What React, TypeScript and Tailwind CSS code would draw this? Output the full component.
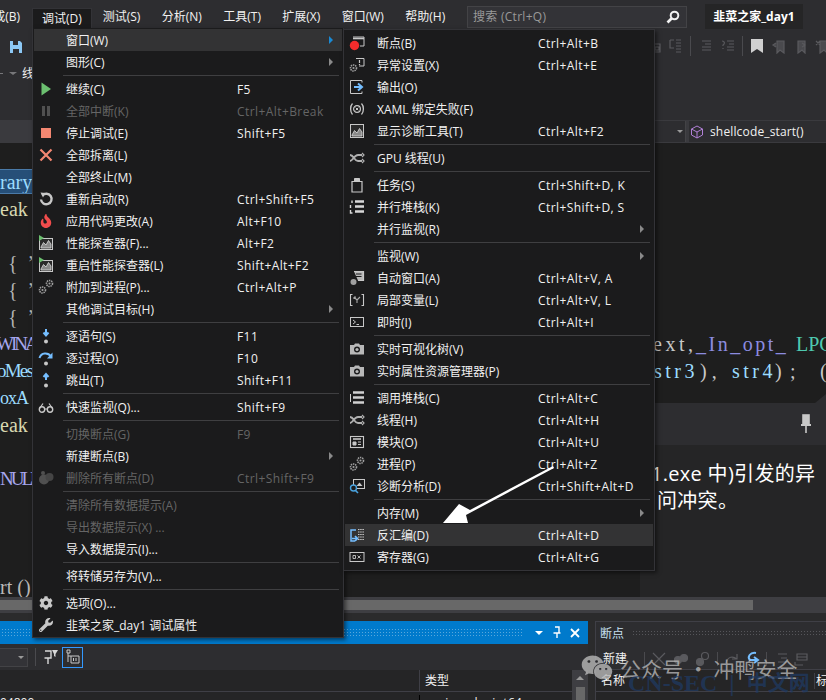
import React from "react";
import { FaCog, FaWrench, FaWeixin, FaFire } from "react-icons/fa";

type IconProps = { children: React.ReactNode; c?: string };
const S = ({ children, c = "#c8c8c8" }: IconProps) => (
  <svg width="16" height="16" viewBox="0 0 16 16" fill="none" stroke={c} strokeWidth="1">
    {children}
  </svg>
);

const Gear = ({ x, y, r, c = "#a0a0a0" }: { x: number; y: number; r: number; c?: string }) => (
  <g>
    <circle cx={x} cy={y} r={r} stroke={c} strokeWidth="1.6" strokeDasharray="1.4 0.8" fill="none" />
    <circle cx={x} cy={y} r={r * 0.35} fill={c} stroke="none" />
  </g>
);

const Chart = ({ green }: { green?: boolean }) => (
  <S>
    <rect x="1.5" y={green ? 3.5 : 1.5} width="13" height={green ? 11 : 13} fill="#2a2a2a" stroke="#c8c8c8" />
    <path d="M3 12 L5.5 7.5 L8 10 L10.5 5.5 L13 9 V13 H3Z" fill="#8a8a8a" stroke="#dcdcdc" strokeWidth="0.8" />
    {green && <path d="M1 0 L6 3 L1 6Z" fill="#6cc070" stroke="none" />}
  </S>
);

const Dot = ({ c = "#c8c8c8", y = 13.5 }: { c?: string; y?: number }) => <circle cx="8" cy={y} r="2" fill={c} stroke="none" />;

const Threads = () => (
  <S>
    <path d="M1 5 C5 5 5 11 9 11 H13 M1 11 C4 11 5 5 9 5 H13" stroke="#b0b0b0" strokeWidth="1.8" />
    <path d="M13 3 L15 5 L13 7 M13 9 L15 11 L13 13" stroke="#b0b0b0" strokeWidth="1.2" />
  </S>
);

const Camera = () => (
  <S>
    <path d="M1 4 H5 L6 2.5 H10 L11 4 H15 V13.5 H1Z" fill="#b8b8b8" stroke="none" />
    <circle cx="8" cy="8.5" r="3" fill="#1b1b1c" stroke="none" />
    <circle cx="8" cy="8.5" r="1.6" fill="#b8b8b8" stroke="none" />
  </S>
);

const StackIcon = () => (
  <S>
    <path d="M4 2.5 H15 M4 7.5 H15 M4 12.5 H15" stroke="#d0d0d0" strokeWidth="2.6" />
    <path d="M1.5 4 V12" stroke="#d0d0d0" strokeWidth="1" />
  </S>
);

const Gears = () => (
  <S>
    <Gear x={4.5} y={11} r={3} />
    <Gear x={11.5} y={4.5} r={3} />
  </S>
);

const icons: Record<string, React.ReactNode> = {
  play: <S c="none"><path d="M3.5 1.5 L13 8 L3.5 14.5Z" fill="#6cc070" /></S>,
  pause: <S c="none"><path d="M4 3 H7 V13 H4Z M9 3 H12 V13 H9Z" fill="#505050" /></S>,
  stop: <S c="none"><rect x="3" y="3" width="10" height="10" fill="#f48771" /></S>,
  cross: <S c="#f48771"><path d="M2.5 2.5 L13.5 13.5 M13.5 2.5 L2.5 13.5" strokeWidth="2.2" /></S>,
  restart: <S><path d="M4.3 4.5 A5.3 5.3 0 1 1 3 8.5" strokeWidth="2.4" /><path d="M2.5 1.5 L7.5 2 L5 6.5Z" fill="#c8c8c8" stroke="none" /></S>,
  fire: <FaFire size={14} color="#f14c4c" />,
  perf: <Chart green />,
  gears: <Gears />,
  into: <S c="none"><path d="M8 1 V6.5 M5.5 4.5 L8 7.5 L10.5 4.5" stroke="#75beff" strokeWidth="2" /><Dot /></S>,
  over: <S c="none"><path d="M1.5 8 C3 2.5 10 2 13 6.5" stroke="#75beff" strokeWidth="2" /><path d="M14.5 2.5 V8.5 H9Z" fill="#75beff" /><Dot /></S>,
  out: <S c="none"><path d="M8 8 V3 M5.5 5 L8 2 L10.5 5" stroke="#75beff" strokeWidth="2" /><Dot /></S>,
  glasses: <S><circle cx="4" cy="10.5" r="2.7" strokeWidth="1.4" /><circle cx="12" cy="10.5" r="2.7" strokeWidth="1.4" /><path d="M6.5 10 H9.5 M1.5 9.5 L5 4.5 M14.5 9.5 L11 4.5" strokeWidth="1.2" /></S>,
  delbp: <S c="none"><circle cx="6" cy="9.5" r="5" fill="#505050" /><circle cx="11.5" cy="7" r="4" fill="#454545" /><circle cx="5" cy="3" r="2" fill="#505050" /></S>,
  cog: <FaCog size={14} color="#c8c8c8" />,
  wrench: <FaWrench size={14} color="#c8c8c8" />,
  bp: <S><path d="M4 2 H15 V11 H11" stroke="#c8c8c8" /><path d="M4 3.5 H15" stroke="#c8c8c8" strokeWidth="1.6" /><circle cx="5.5" cy="10.5" r="4.7" fill="#f42c2c" stroke="none" /></S>,
  exc: <S><path d="M7 1.5 H15 V9 H10" /><path d="M10.5 3 V6 M10.5 7 V8" strokeWidth="1.2" /><Gear x={4.5} y={11} r={3} /></S>,
  output: <S><path d="M13 3.5 V1.5 H1.5 V14.5 H13 V12.5" /><path d="M5 8 H12 M9 4.5 L13 8 L9 11.5" stroke="#75beff" strokeWidth="2" /></S>,
  xaml: <S><path d="M3.5 2.5 C1 5 1 11 3.5 13.5 M12.5 2.5 C15 5 15 11 12.5 13.5" strokeWidth="1.3" /><circle cx="8" cy="8" r="3.4" strokeWidth="1.2" /><path d="M6.7 6.7 L9.3 9.3 M9.3 6.7 L6.7 9.3" strokeWidth="1" /></S>,
  diag: <Chart />,
  gpu: <Threads />,
  task: <S><path d="M3 4.5 H13 V15 H3Z" strokeWidth="1.2" /><path d="M5.5 1.5 H10.5 V4.5 H5.5Z" fill="#c8c8c8" /></S>,
  pstack: <S><path d="M6 2.5 H15 M6 7.5 H15 M6 12.5 H15" stroke="#d8d8d8" strokeWidth="2.6" /><path d="M3 1.5 V4 M1.5 6 V9 M1.5 11 V14 H3.5" stroke="#d8d8d8" strokeWidth="1.4" /></S>,
  autos: <S><path d="M5 1.5 H14.5 V10.5 H9" strokeWidth="1.2" fill="#b8b8b8" /><path d="M7 4 H12.5 M7 6.5 H12.5" stroke="#1b1b1c" strokeWidth="1.2" /><circle cx="4.5" cy="12" r="3" fill="#a0a0a0" stroke="none" /></S>,
  locals: <S><path d="M3.5 2.5 H1.5 V13.5 H3.5 M12.5 2.5 H14.5 V13.5 H12.5" strokeWidth="1.1" /><path d="M5 5 L8 8 V11 M11 5 L8 8 M5 5 H7 M5 5 V7" strokeWidth="1.1" stroke="#a8a8a8" /></S>,
  immediate: <S><rect x="1.5" y="3.5" width="13" height="9" strokeWidth="1" /><path d="M4 6 L6.5 8 L4 10 M7.5 10.5 H10" strokeWidth="1" /></S>,
  cam: <Camera />,
  stack: <StackIcon />,
  modules: <S><rect x="1.5" y="2.5" width="13" height="11" strokeWidth="1.1" /><path d="M4 5 H12" strokeWidth="1.6" /><path d="M4 8 H7 V11 H4Z M9 8 H12 M9 10.5 H12" fill="#c8c8c8" /></S>,
  analyze: <S><rect x="4.5" y="1.5" width="11" height="9" strokeWidth="1" /><path d="M7.5 8 L10.5 4.5 L13.5 8Z" fill="#c8c8c8" stroke="none" /><circle cx="4.5" cy="10" r="3" stroke="#4aa3df" strokeWidth="1.4" fill="#1b1b1c" /><path d="M6.5 12.5 L9 15" stroke="#4aa3df" strokeWidth="1.6" /></S>,
  disasm: <S c="none"><path d="M9 2.5 H15 M9 5 H15 M9 7.5 H15 M9 10 H15 M9 12.5 H15" stroke="#c8c8c8" strokeDasharray="1.5 .7" /><path d="M2 7 V3 H7 M2 3 V14 H6" stroke="#75beff" strokeWidth="1.5" /><path d="M3 11.5 H8 M6 9 L8.5 11.5 L6 14" stroke="#75beff" strokeWidth="1.7" /></S>,
  reg: <S><rect x="1" y="3.5" width="14" height="9" strokeWidth="1" /><path d="M4 6.5 H6.5 V9.5 H4Z M8.5 6.5 L11.5 9.5 M11.5 6.5 L8.5 9.5" strokeWidth="0.9" /></S>,
};

type Row = { k?: string; t?: string; s?: string; d?: boolean; sub?: boolean; hl?: boolean; sep?: boolean };

const menu1: Row[] = [
  { t: "窗口(W)", sub: true, hl: true },
  { t: "图形(C)", sub: true },
  { sep: true },
  { k: "play", t: "继续(C)", s: "F5" },
  { k: "pause", t: "全部中断(K)", s: "Ctrl+Alt+Break", d: true },
  { k: "stop", t: "停止调试(E)", s: "Shift+F5" },
  { k: "cross", t: "全部拆离(L)" },
  { t: "全部终止(M)" },
  { k: "restart", t: "重新启动(R)", s: "Ctrl+Shift+F5" },
  { k: "fire", t: "应用代码更改(A)", s: "Alt+F10" },
  { k: "perf", t: "性能探查器(F)...", s: "Alt+F2" },
  { k: "perf", t: "重启性能探查器(L)", s: "Shift+Alt+F2" },
  { k: "gears", t: "附加到进程(P)...", s: "Ctrl+Alt+P" },
  { t: "其他调试目标(H)", sub: true },
  { sep: true },
  { k: "into", t: "逐语句(S)", s: "F11" },
  { k: "over", t: "逐过程(O)", s: "F10" },
  { k: "out", t: "跳出(T)", s: "Shift+F11" },
  { sep: true },
  { k: "glasses", t: "快速监视(Q)...", s: "Shift+F9" },
  { sep: true },
  { t: "切换断点(G)", s: "F9", d: true },
  { t: "新建断点(B)", sub: true },
  { k: "delbp", t: "删除所有断点(D)", s: "Ctrl+Shift+F9", d: true },
  { sep: true },
  { t: "清除所有数据提示(A)", d: true },
  { t: "导出数据提示(X) ...", d: true },
  { t: "导入数据提示(I)..." },
  { sep: true },
  { t: "将转储另存为(V)..." },
  { sep: true },
  { k: "cog", t: "选项(O)..." },
  { k: "wrench", t: "韭菜之家_day1 调试属性" },
];

const menu2: Row[] = [
  { k: "bp", t: "断点(B)", s: "Ctrl+Alt+B" },
  { k: "exc", t: "异常设置(X)", s: "Ctrl+Alt+E" },
  { k: "output", t: "输出(O)" },
  { k: "xaml", t: "XAML 绑定失败(F)" },
  { k: "diag", t: "显示诊断工具(T)", s: "Ctrl+Alt+F2" },
  { sep: true },
  { k: "gpu", t: "GPU 线程(U)" },
  { sep: true },
  { k: "task", t: "任务(S)", s: "Ctrl+Shift+D, K" },
  { k: "pstack", t: "并行堆栈(K)", s: "Ctrl+Shift+D, S" },
  { t: "并行监视(R)", sub: true },
  { sep: true },
  { t: "监视(W)", sub: true },
  { k: "autos", t: "自动窗口(A)", s: "Ctrl+Alt+V, A" },
  { k: "locals", t: "局部变量(L)", s: "Ctrl+Alt+V, L" },
  { k: "immediate", t: "即时(I)", s: "Ctrl+Alt+I" },
  { sep: true },
  { k: "cam", t: "实时可视化树(V)" },
  { k: "cam", t: "实时属性资源管理器(P)" },
  { sep: true },
  { k: "stack", t: "调用堆栈(C)", s: "Ctrl+Alt+C" },
  { k: "gpu", t: "线程(H)", s: "Ctrl+Alt+H" },
  { k: "modules", t: "模块(O)", s: "Ctrl+Alt+U" },
  { k: "gears", t: "进程(P)", s: "Ctrl+Alt+Z" },
  { k: "analyze", t: "诊断分析(D)", s: "Ctrl+Shift+Alt+D" },
  { sep: true },
  { t: "内存(M)", sub: true },
  { k: "disasm", t: "反汇编(D)", s: "Ctrl+Alt+D", hl: true },
  { k: "reg", t: "寄存器(G)", s: "Ctrl+Alt+G" },
];

function MenuRows({ rows, labelClass, accent }: { rows: Row[]; labelClass: string; accent: boolean }) {
  return (
    <>
      {rows.map((r, i) =>
        r.sep ? (
          <div key={i} className="h-[5px] flex items-center pl-[29px] pr-[3px]">
            <div className="h-px w-full bg-[#3f3f41]" />
          </div>
        ) : (
          <div
            key={i}
            className={`h-[22px] flex items-center ${r.hl ? "bg-[#333334]" : ""} ${r.d ? "text-[#656565]" : "text-[#f1f1f1]"}`}
          >
            <div className="w-[24px] h-[22px] flex items-center justify-center shrink-0">{r.k ? icons[r.k] : null}</div>
            <div className={`pl-[8px] shrink-0 whitespace-nowrap translate-y-px ${labelClass}`}>{r.t}</div>
            <div className="flex-1 whitespace-nowrap tracking-[0.42px] translate-y-px">{r.s}</div>
            {r.sub && (
              <div
                className={`mr-[9px] w-0 h-0 border-y-[4px] border-y-transparent border-l-[4px] ${
                  r.hl && accent ? "border-l-[#1a8ad4]" : "border-l-[#8a8a8a]"
                }`}
              />
            )}
          </div>
        )
      )}
    </>
  );
}

const codeLines: { l: string; lc?: string; sel?: boolean; pad?: boolean; r?: React.ReactNode }[] = [
  { l: "" },
  { l: "rary", lc: "text-[#9cdcfe]", sel: true },
  { l: "eak", lc: "text-[#d8d8b0]" },
  { l: "" },
  { l: "{  ’", lc: "text-[#b4b4b4]", pad: true },
  { l: "{  ’", lc: "text-[#b4b4b4]", pad: true },
  { l: "{  ’", lc: "text-[#b4b4b4]", pad: true },
  {
    l: "WINA",
    lc: "text-[#a6a6ee] text-[19px] tracking-[-3px] -ml-[4px]",
    r: (
      <>
        <span className="inline-block w-[43px] text-[#c8c8c8]">ext,</span>
        <span className="inline-block w-[100px] text-[#8c8ce0] tracking-[2.5px]">_In_opt_</span>
        <span className="text-[#4ec9b0] tracking-[0px]">LPC</span>
      </>
    ),
  },
  {
    l: "oMes",
    lc: "text-[#9cdcfe] text-[19px] tracking-[-1.8px] -ml-[3px]",
    r: (
      <>
        <span className="inline-block w-[46px] text-[#9cdcfe]">str3</span>
        <span className="inline-block w-[32px] text-[#c8c8c8] tracking-[5px]">),</span>
        <span className="inline-block w-[43px] text-[#9cdcfe]">str4</span>
        <span className="inline-block w-[15px] text-[#c8c8c8]">)</span>
        <span className="inline-block w-[30px] text-[#c8c8c8]">;</span>
        <span className="text-[#c8c8c8]">(</span>
      </>
    ),
  },
  { l: "oxA", lc: "text-[#9cdcfe] text-[18px] tracking-[-1px]" },
  { l: "eak", lc: "text-[#d8d8b0]" },
  { l: "" },
  { l: "NULL", lc: "text-[#a6a6ee] text-[19px] tracking-[-3px]" },
  { l: "" },
  { l: "" },
  { l: "" },
  { l: "rt ()", lc: "text-[#b8b8b8]" },
];

const dots = "bg-[radial-gradient(circle,#59a7dc_0.6px,transparent_0.8px)] bg-[length:3px_3px]";
const dotsDark = "bg-[radial-gradient(circle,#55555a_0.6px,transparent_0.8px)] bg-[length:3px_3px]";

const TopItem = ({ t }: { t: string }) => <div className="px-[10.7px] whitespace-nowrap text-[#f1f1f1]">{t}</div>;

const Dim = ({ children, className }: { children: React.ReactNode; className?: string }) => (
  <svg width="16" height="16" viewBox="0 0 16 16" fill="none" stroke="#5a5a5e" strokeWidth="1.2" className={`shrink-0 ${className ?? ""}`}>
    {children}
  </svg>
);

export default function App() {
  return (
    <div className="relative w-[826px] h-[700px] overflow-hidden bg-[#2d2d30] text-[12px] leading-[16px] font-['Open_Sans','Noto_Sans_CJK_SC',sans-serif]">
      <div className="flex flex-col h-full">
        {/* menu bar */}
        <div className="h-[28px] flex items-center pt-[5px] shrink-0">
          <div className="w-[32px] flex justify-end pr-[12px] text-[#f1f1f1] overflow-hidden whitespace-nowrap">成(B)</div>
          <div className="w-[60px] h-[20px] self-end pl-[9px] flex items-center bg-[#1b1b1c] border-t border-x border-[#333337] text-[#f1f1f1]">
            调试(D)
          </div>
          <TopItem t="测试(S)" />
          <TopItem t="分析(N)" />
          <TopItem t="工具(T)" />
          <TopItem t="扩展(X)" />
          <TopItem t="窗口(W)" />
          <TopItem t="帮助(H)" />
          <div className="ml-[11px] w-[220px] h-[22px] flex items-center justify-between pl-[5px] pr-[6px] bg-[#333337] border border-[#434346] text-[#999999]">
            <span className="tracking-[0.3px]">搜索 (Ctrl+Q)</span>
            <svg width="14" height="14" viewBox="0 0 14 14" fill="none" stroke="#f1f1f1" strokeWidth="2">
              <circle cx="8.5" cy="5.5" r="3.8" />
              <path d="M5.5 8.5 L1.5 12.5" strokeWidth="2.6" />
            </svg>
          </div>
          <div className="ml-[18px] w-[98px] h-[25px] flex items-center justify-center bg-[#252526] text-white font-bold">韭菜之家_day1</div>
        </div>
        {/* toolbars */}
        <div className="h-[30px] flex items-center pt-[6px] shrink-0">
          <svg width="12" height="12" viewBox="0 0 12 12" className="ml-[10px] mt-[2px] shrink-0">
            <path d="M0 0 H10 L12 2 V12 H0Z" fill="#8cc8f5" />
            <path d="M3 0 H8 V4 H3Z" fill="#2d2d30" />
            <path d="M3 8 H9 V12 H3Z" fill="#2d2d30" />
          </svg>
          <Dim className="ml-[624px]"><path d="M2 6 H14 V14 H2Z M9 9 H13 V12 H9Z" /></Dim>
          <Dim className="ml-[5px]"><path d="M3 2 H7 M3 2 V10 H7 M9 2 H14 M9 5 H14 M9 8 H14 M9 11 H14 M9 14 H14" /></Dim>
          <div className="w-px h-[20px] bg-[#4a4a4e] ml-[7px] shrink-0" />
          <Dim className="ml-[6px]"><path d="M5 3 H14 M8 6 H14 M5 9 H14 M5 12 H14" /></Dim>
          <Dim className="ml-[7px]"><path d="M7 3 H14 M9 6 H14 M7 9 H14 M7 12 H14 M2 3 C5 3 5 6 3 7 V8 M3 10 V11" /></Dim>
          <div className="w-px h-[20px] bg-[#4a4a4e] ml-[6px] shrink-0" />
          <svg width="12" height="14" viewBox="0 0 12 14" className="ml-[8px] shrink-0"><path d="M0 0 H12 V14 L6 10 L0 14Z" fill="#d0d0d0" /></svg>
          <Dim className="ml-[8px]"><path d="M6 3 H13 V15 L9 12 L6 15Z M5 5 L2 7 L5 9" fill="#4a4a4e" /></Dim>
          <Dim className="ml-[6px]"><path d="M5 3 H12 V15 L9 12 L5 15Z M9 5 L12 7 L9 9" fill="#4a4a4e" /></Dim>
          <Dim className="ml-[6px]"><path d="M5 3 H12 V15 L9 12 L5 15Z M1 3 L5 7 M5 3 L1 7" fill="#4a4a4e" /></Dim>
        </div>
        <div className="h-[26px] flex items-center pt-[5px] shrink-0 text-[#f1f1f1]">
          <span className="w-[3px] h-px bg-[#77777a]" />
          <span className="ml-[6px] w-0 h-0 border-x-[4px] border-x-transparent border-t-[3px] border-t-[#77777a]" />
          <span className="ml-[5px]">线</span>
        </div>
        <div className="h-[36px] shrink-0" />
        {/* navigation bar */}
        <div className="h-[23px] flex items-center shrink-0 bg-[#3a3a3e]">
          <div className="w-[655px]" />
          <div className="w-[31px] h-[21px] flex items-center justify-end pr-[2px] bg-[#2d2d30] border-r border-[#434346]">
            <span className="w-0 h-0 border-x-[3px] border-x-transparent border-t-[3px] border-t-[#9a9a9a]" />
          </div>
          <div className="ml-[3px] flex-1 h-[21px] flex items-center gap-[6px] pl-[2px] bg-[#2d2d30] text-[#f1f1f1] whitespace-nowrap">
            <svg width="14" height="14" viewBox="0 0 14 14" fill="none" stroke="#b180d7" strokeWidth="1" className="-ml-[1px]">
              <path d="M7 1 L12.5 4 V10 L7 13 L1.5 10 V4Z M1.5 4 L7 7 L12.5 4 M7 7 V13" />
            </svg>
            <span className="tracking-[0.15px]">shellcode_start()</span>
          </div>
        </div>
        {/* editor */}
        <div className="relative h-[454px] shrink-0 bg-[#1e1e1e] overflow-hidden font-['Liberation_Serif',serif] text-[20px]">
          {codeLines.map((line, i) => (
            <div key={i} className="h-[27px] -translate-y-[2px] flex items-center whitespace-pre">
              <div className={`w-[655px] shrink-0 ${line.pad ? "pl-[8px]" : ""} ${line.lc ?? ""}`}>
                {line.sel ? (
                  <span className="inline-block w-[32px] h-[25px] leading-[25px] overflow-hidden bg-[#264f78] border-y border-[#4a7aa8]">{line.l}</span>
                ) : (
                  line.l
                )}
              </div>
              <div className="pl-[2px] tracking-[3.5px]">{line.r}</div>
            </div>
          ))}
          {/* exception popup */}
          <div className="absolute left-[640px] right-0 top-[260px] h-[194px] flex flex-col font-['Open_Sans','Noto_Sans_CJK_SC',sans-serif] text-[20px] leading-[27px] text-white">
            <svg className="absolute right-0 -top-[9px]" width="11" height="9" viewBox="0 0 11 9"><path d="M0 9 L11 0 V9Z" fill="#2d2d30" /></svg>
            <div className="h-[42px] shrink-0 bg-[#2d2d30] flex items-center justify-end pr-[14px]">
              <svg width="12" height="20" viewBox="0 0 12 20" fill="none" stroke="#c8c8c8" strokeWidth="1.6">
                <rect x="3" y="1" width="6" height="9" fill="#c8c8c8" />
                <path d="M1 11 H11" strokeWidth="2" />
                <path d="M6 11 V19" />
              </svg>
            </div>
            <div className="flex-1 bg-[#252526] pl-[11px] pt-[15px] whitespace-nowrap tracking-[0.3px]">
              <div>1.exe 中)引发的异</div>
              <div className="pl-[6px]">问冲突。</div>
            </div>
          </div>
        </div>
        {/* horizontal scrollbar */}
        <div className="h-[16px] shrink-0 bg-[#3e3e42] flex items-center">
          <div className="w-[753px] h-[10px] bg-[#686868]" />
        </div>
        <div className="h-[8px] shrink-0 bg-[#2b2b2c]" />
        {/* bottom panels */}
        <div className="flex-1 flex min-h-0">
          <div className="w-[588px] shrink-0 flex flex-col">
            <div className="h-[23px] shrink-0 bg-[#007acc] flex items-center text-white">
              <div className={`flex-1 h-[9px] ml-[1px] mr-[12px] ${dots}`} />
              <span className="w-0 h-0 border-x-[4px] border-x-transparent border-t-[4px] border-t-white mr-[9px]" />
              <svg width="10" height="13" viewBox="0 0 10 13" fill="none" stroke="white" strokeWidth="1.4" className="mr-[8px]">
                <path d="M3 1 H7 V7 H1.5 H8.5 M5 7 V12" />
              </svg>
              <svg width="10" height="10" viewBox="0 0 10 10" stroke="white" strokeWidth="1.8" className="mr-[8px]">
                <path d="M1 1 L9 9 M9 1 L1 9" />
              </svg>
            </div>
            <div className="h-[26px] shrink-0 flex items-center">
              <div className="w-[28px] h-[19px] bg-[#333337] border border-[#434346] border-l-0 flex items-center justify-end pr-[3px] shrink-0">
                <span className="w-0 h-0 border-x-[3px] border-x-transparent border-t-[3px] border-t-[#9a9a9a]" />
              </div>
              <div className="w-px h-[18px] bg-[#4a4a4e] ml-[7px]" />
              <svg width="16" height="18" viewBox="0 0 16 18" fill="none" stroke="#d8d8d8" strokeWidth="1.4" className="ml-[7px]">
                <path d="M2 3 H8 V10 H1.5 H8.5 M5 10 V16" />
                <path d="M9 2 H15 L12.5 6 V9 L11 8 V6Z" fill="#d8d8d8" stroke="none" />
              </svg>
              <div className="w-[21px] h-[21px] ml-[3px] border border-[#3399ff] flex items-center justify-center">
                <svg width="14" height="16" viewBox="0 0 14 16" fill="none" stroke="#c8c8c8" strokeWidth="1">
                  <path d="M1 1 H4 V4 H1Z M2 4 V13 M2 7 H5 M5 7 H13 V14 H5Z M7.5 9 V12 M10 9 V12" />
                </svg>
              </div>
            </div>
            <div className="flex-1 flex min-h-0">
              <div className="flex-1 flex flex-col min-w-0">
                <div className="h-[22px] shrink-0 bg-[#252526] border-b border-[#3f3f46] flex">
                  <div className="w-[419px]" />
                  <div className="flex-1 border-l border-[#3f3f46] pl-[5px] flex items-center text-[#f1f1f1]">类型</div>
                </div>
                <div className="flex-1 bg-[#252526] flex text-[#f1f1f1] overflow-hidden pt-[3px]">
                  <div className="w-[419px] overflow-hidden whitespace-nowrap">04800</div>
                  <div className="flex-1 border-l border-[#000000] pl-[4px] whitespace-nowrap tracking-[0.3px]">unsigned __int64</div>
                </div>
              </div>
              <div className="w-[16px] shrink-0 bg-[#3e3e42] flex flex-col items-center pt-[6px]">
                <span className="w-0 h-0 border-x-[4px] border-x-transparent border-b-[4px] border-b-[#999999]" />
                <div className="w-[9px] flex-1 mt-[7px] bg-[#686868]" />
              </div>
            </div>
          </div>
          <div className="w-[7px] shrink-0 bg-[#2b2b2c]" />
          <div className="flex-1 flex flex-col border-l border-t border-[#3f3f46] bg-[#2d2d30] text-[#f1f1f1] min-w-0">
            <div className="h-[23px] shrink-0 flex items-center pl-[4px] gap-[8px]">
              <span className="text-[#c8e0f0] whitespace-nowrap">断点</span>
              <div className={`flex-1 h-[7px] ${dotsDark}`} />
            </div>
            <div className="h-[24px] shrink-0 flex items-center pl-[7px] pt-[3px] whitespace-nowrap">
              <span className="shrink-0">新建</span>
              <div className="w-px h-[14px] bg-[#4a4a4e] ml-[17px] shrink-0" />
              <Dim className="ml-[6px]"><path d="M2 2 L14 14 M14 2 L2 14" /></Dim>
              <Dim className="ml-[6px]"><circle cx="5" cy="9" r="3.5" fill="#5a5a5e" /><circle cx="11" cy="7" r="3.5" fill="#5a5a5e" /></Dim>
              <Dim className="ml-[6px]"><circle cx="10" cy="5" r="3.5" /><circle cx="5" cy="11" r="3.5" fill="#5a5a5e" /></Dim>
              <div className="w-px h-[14px] bg-[#4a4a4e] ml-[6px] shrink-0" />
              <Dim className="ml-[6px]"><path d="M2 12 C4 5 9 5 13 8 M13 3 V8 H8" /></Dim>
              <svg width="16" height="16" viewBox="0 0 16 16" fill="none" stroke="#75beff" strokeWidth="2" className="ml-[4px] shrink-0"><path d="M12 2 C6 1 3 6 6 9 H13 M10 6 L14 9 L10 12" /></svg>
              <div className="w-px h-[14px] bg-[#4a4a4e] ml-[6px] shrink-0" />
              <Dim className="ml-[6px]"><path d="M5 3 H14 M8 7 H14 M5 11 H14" /></Dim>
              <Dim className="ml-[4px]"><path d="M4 3 H14 V9 H4Z M4 6 H14 M2 11 V14 H10" /></Dim>
            </div>
            <div className="h-[23px] shrink-0 bg-[#252526] border-y border-[#3f3f46] flex items-center justify-between pl-[5px]">
              <span className="whitespace-nowrap">名称</span>
              <span className="w-[12px] overflow-hidden border-l border-[#3f3f46] pl-[1px] whitespace-nowrap">标记</span>
            </div>
            <div className="flex-1 bg-[#252526]" />
          </div>
        </div>
      </div>

      {/* debug menu */}
      <div className="absolute left-[32px] top-[28px] w-[312px] h-[610px] px-[1px] border border-[#333337] border-t-0 bg-[#1b1b1c] shadow-[2px_2px_4px_rgba(0,0,0,0.5)]">
        <div className="h-px" />
        <MenuRows rows={menu1} labelClass="w-[179px]" accent />
      </div>
      {/* window submenu */}
      <div className="absolute left-[343px] top-[29px] w-[312px] h-[542px] pt-[2px] px-[1px] border border-[#333337] bg-[#1b1b1c] shadow-[2px_2px_4px_rgba(0,0,0,0.5)]">
        <MenuRows rows={menu2} labelClass="w-[169px]" accent={false} />
      </div>

      {/* annotation arrow */}
      <svg className="absolute left-0 top-0 pointer-events-none" width="826" height="700">
        <polygon points="553,466 470,510 459,504 443,523 468,523 466,515 554,468" fill="#ffffff" />
      </svg>

      {/* watermark */}
      <div className="absolute left-[581px] top-[652px] flex items-center pointer-events-none text-[#b8b8b8]/80">
        <FaWeixin size={32} />
        <span className="ml-[7px] text-[21px] leading-[28px] whitespace-nowrap font-['Noto_Sans_CJK_SC',sans-serif]">公众号 · 冲鸭安全</span>
      </div>
      <div className="absolute left-[628px] top-[669px] flex items-center h-[28px] font-bold whitespace-nowrap pointer-events-none text-[#1f3b66]/70 font-['Liberation_Serif','Noto_Sans_CJK_SC',serif]">
        <span className="text-[24px]">CN-SEC</span>
        <span className="ml-[12px] text-[24px]">|</span>
        <span className="ml-[12px] text-[21px]">中文网</span>
      </div>
    </div>
  );
}
